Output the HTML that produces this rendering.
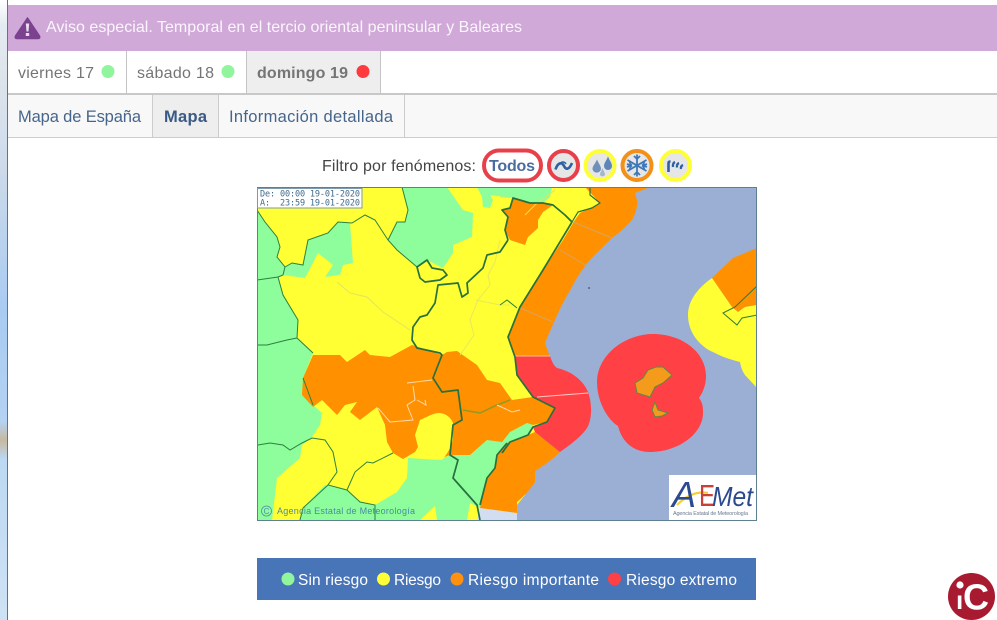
<!DOCTYPE html>
<html lang="es"><head><meta charset="utf-8"><title>Aviso especial</title>
<style>
html,body{margin:0;padding:0;background:#fff;width:997px;height:620px;overflow:hidden}
body{position:relative;font-family:"Liberation Sans",sans-serif}
.a{position:absolute}
svg{position:absolute;left:0;top:0}
</style></head><body>
<div class="a" style="left:0;top:0;width:7px;height:620px;background:linear-gradient(180deg,#fff 0,#e4ebf2 4%,#dde4ea 12%,#d6e0ec 20%,#c8d8ea 30%,#a9cbf2 50%,#b4d2f2 68%,#c6b9a0 71%,#bcd8f2 74%,#cfe2f5 100%)"></div>
<div class="a" style="left:7px;top:0;width:1px;height:620px;background:#5a6fb0"></div>
<div class="a" style="left:8px;top:5px;width:989px;height:46px;background:#d0a9d9"></div>
<div class="a" style="left:8px;top:93px;width:989px;height:2px;background:#c8c8c8"></div>
<div class="a" style="left:247px;top:51px;width:133px;height:42px;background:#eee"></div>
<div class="a" style="left:126px;top:51px;width:1px;height:42px;background:#c4c4c4"></div>
<div class="a" style="left:246px;top:51px;width:1px;height:42px;background:#c4c4c4"></div>
<div class="a" style="left:380px;top:51px;width:1px;height:42px;background:#c4c4c4"></div>
<div class="a" style="left:8px;top:95px;width:989px;height:42px;background:#f8f8f8"></div>
<div class="a" style="left:153px;top:95px;width:65px;height:42px;background:#eee"></div>
<div class="a" style="left:152px;top:95px;width:1px;height:42px;background:#ccc"></div>
<div class="a" style="left:218px;top:95px;width:1px;height:42px;background:#ccc"></div>
<div class="a" style="left:404px;top:95px;width:1px;height:42px;background:#ccc"></div>
<div class="a" style="left:8px;top:137px;width:989px;height:1px;background:#ccc"></div>
<div class="a" style="left:257px;top:558px;width:499px;height:42px;background:#4874b8"></div>

<svg width="997" height="620" viewBox="0 0 997 620" font-family="'Liberation Sans',sans-serif">
<defs><clipPath id="m"><rect x="258" y="188" width="498" height="332"/></clipPath></defs>
<path d="M27.500 18 L39.500 36 Q40.500 38.500 38 38.500 L17 38.500 Q14.500 38.500 15.500 36 Z" fill="#7b4290" stroke="#7b4290" stroke-width="1.500" stroke-linejoin="round"/>
<path d="M25.800 23.500h3.400l-.7 8h-2z M25.800 33h3.400v3h-3.400z" fill="#ecdcf0"/>
<text x="46" y="32" font-size="16" fill="#fbf5fc" textLength="476" lengthAdjust="spacing">Aviso especial. Temporal en el tercio oriental peninsular y Baleares</text>

<text x="18" y="78" font-size="16" fill="#757575" textLength="76" lengthAdjust="spacing">viernes 17</text>
<circle cx="108" cy="71.500" r="6.500" fill="#90f59c"/>
<text x="137" y="78" font-size="16" fill="#757575" textLength="77" lengthAdjust="spacing">sábado 18</text>
<circle cx="228" cy="71.500" r="6.500" fill="#90f59c"/>
<text x="257" y="78" font-size="16" font-weight="bold" fill="#757575" textLength="91" lengthAdjust="spacing">domingo 19</text>
<circle cx="363" cy="71.500" r="6.500" fill="#ff3a3f"/>

<text x="18" y="122" font-size="16.500" fill="#46658c" textLength="123" lengthAdjust="spacing">Mapa de España</text>
<text x="164" y="122" font-size="16.500" font-weight="bold" fill="#3a5a85" textLength="43" lengthAdjust="spacing">Mapa</text>
<text x="229" y="122" font-size="16.500" fill="#46658c" textLength="164" lengthAdjust="spacing">Información detallada</text>

<text x="322" y="171" font-size="16" fill="#444" textLength="154" lengthAdjust="spacing">Filtro por fenómenos:</text>
<rect x="484" y="150.500" width="57" height="30" rx="15" fill="#fff" stroke="#e8404a" stroke-width="4"/>
<text x="489" y="171" font-size="16" font-weight="bold" fill="#4b6c9e" textLength="46" lengthAdjust="spacing">Todos</text>
<circle cx="563.500" cy="165.500" r="14.500" fill="#e6e6e6" stroke="#e8404a" stroke-width="4"/>
<path d="M555.500 169.500C558 162 562 162 564 166S569 170 572 163" fill="none" stroke="#2f5fa5" stroke-width="2.600"/>
<path d="M559 164.500C562 160.500 565 162 566 164" fill="none" stroke="#2f5fa5" stroke-width="1.400"/>
<circle cx="600" cy="165.500" r="14.500" fill="#e6e6e6" stroke="#ffff38" stroke-width="4"/>
<path d="M597 159.500C595 164 592.500 166 592.500 169A4.300 4.300 0 0 0 601 169C601 166 599 164 597 159.500Z" fill="#6f90ba"/>
<path d="M608 156.500C606.500 160.500 604 163 604 166A4 4 0 0 0 612 166C612 163 609.500 160.500 608 156.500Z" fill="#5f86b8"/>
<path d="M602.500 168C601.500 171 600 172.500 600 174.500A2.600 2.600 0 0 0 605 174.500C605 172.500 603.500 171 602.500 168Z" fill="#a4b6cc"/>
<circle cx="637" cy="165.500" r="14.500" fill="#e6e6e6" stroke="#f39019" stroke-width="4"/>
<g stroke="#3f78b8" stroke-width="1.800" fill="none">
<path d="M637 154.500v22M627.500 160l19 11M627.500 171l19-11"/>
<path d="M634 156l3 3 3-3M634 175l3-3 3 3M627 164l4 1.500-1.500-4.500M647 164l-4 1.500 1.500-4.500M627 167l4-1.500-1.500 4.500M647 167l-4-1.500 1.500 4.500"/>
</g>
<circle cx="675.500" cy="165.500" r="14.500" fill="#e6e6e6" stroke="#ffff38" stroke-width="4"/>
<g fill="none" stroke="#2f5fa5">
<path d="M668.500 172v-9q0-1.500 2-1.500" stroke-width="2.600"/>
<path d="M673 167q-.5-4 2-5M677 167.500q-.5-3.500 2-4.500M681 169q-.5-3 2-4" stroke-width="2.300"/>
</g>

<g clip-path="url(#m)">
<rect x="257" y="187" width="500" height="334" fill="#ffff33"/>
<!-- sea -->
<path d="M625 187H757V521H517V505L525 495L530 475L545 460L540 432L550 425L560 410L540 400L525 360L520 340L540 290L575 230L590 222L615 200Z" fill="#9bafd5"/>
<!-- greens -->
<g fill="#8efd9c">
<path d="M257 210L265 222L277 237L280 247L277 257L285 267L283 275L278 277L283 295L298 320L297 338L313 353L303 378L302 395L313 405L322 413L320 425L312 437L302 445L300 458L277 478L272 520H257Z"/>
<path d="M402 187L408 210L405 222L397 222L388 240L397 250L417 267L427 260L443 268L453 253L453 245L472 237L473 213L463 210L447 187Z"/>
<path d="M285 267L292 263L303 265L308 240L328 233L338 222L350 223L352 250L353 263L343 265L340 275L325 277L333 265L318 253L305 278L283 275Z"/>
<path d="M477 187H552L550 197L543 203L530 203L513 198L505 197L490 195L493 200L490 208L483 207L482 197Z"/>
<path d="M325 485L347 490L360 502L375 505L397 492L407 478L408 458L440 460L450 455L470 455L487 440L502 440L510 432L527 423L533 425L528 435L510 442L497 455L495 468L487 478L480 508L470 503L467 520H437L435 506L420 520H300L303 508Z"/>
</g>
<path d="M480 508L517 513V521H477Z" fill="#d3ddf1"/>
<!-- orange -->
<g fill="#ff9000">
<path d="M513 198L530 203L543 203L553 205L543 212L538 220L538 228L528 237L525 245L510 240L505 230L508 217L502 210L510 208Z"/>
<path d="M585 187L600 203L580 213L575 220L563 240L543 270L520 307L508 337L515 357H550L545 343C548 335 552 327 555 320C560 308 566 297 572 287C577 277 583 268 590 260C597 252 605 245 612 238C620 232 627 226 632 220C636 212 638 205 637 200L635 193L650 187Z"/>
<path d="M313 355L340 355L347 362L365 350L370 355L390 357L412 345L442 355L447 352L457 351L477 365L487 380L500 383L512 400L533 397L555 408L547 422L533 425L527 423L510 432L502 442L487 440L470 455H450L442 458L418 447L415 452L403 459L393 453L387 442L385 425L377 407L360 420L350 412L357 402L345 405L337 415L322 400L313 407L302 395L303 378Z"/>
<path d="M535 432L560 452C552 460 543 466 535 471V482C530 490 523 497 517 502V513L480 508L487 478L495 468L497 455L507 443L528 435Z"/>
<path d="M712 278L733 258L757 248V305L745 307L738 312L732 307Z"/>
</g>
<path d="M420 420C427 417 433 413 440 413C447 414 451 418 453 423L453 440C451 448 447 454 442 460L418 447L415 435Z" fill="#ffff33"/>
<!-- red -->
<g fill="#ff4044">
<path d="M515 356H550C552 362 554 366 557 368C575 372 586 384 589 395C592 405 592 420 587 428C582 436 570 445 560 452L535 432L533 427L547 422L555 408L533 397L517 375Z"/>
<path d="M597 382C597 355 625 334 653 334C682 334 706 352 706 376C706 385 703 392 699 398C703 403 703 408 703 413C703 434 678 452 650 452C633 452 622 442 618 426C608 420 597 402 597 382Z"/>
</g>
<path d="M635 383L643 378L648 370L656 367L663 367L672 375L663 383L655 387L650 397L637 393Z M655 402L658 410L668 413L662 416L655 417L652 410Z" fill="#f59b1b" stroke="#5c8a45" stroke-width="1"/>
<!-- balearic NE -->
<path d="M712 278C695 290 688 303 688 315C688 335 703 348 713 352C722 357 732 360 740 362C741 368 743 372 745 375L757 388V305L745 307L738 312L732 307Z" fill="#ffff33"/>
<path d="M757 286L735 307L723 313L737 325L742 318L757 315" fill="none" stroke="#2c7a3c" stroke-width="1"/>
<!-- pale lines -->
<g fill="none" stroke-width="1">
<path d="M573 222L612 238M560 250L587 266M520 308L553 322" stroke="#d8a45c"/>
<path d="M537 397L588 393" stroke="#ffc8c8"/>
<path d="M515 356H550" stroke="#ffc090"/>
<path d="M337 282L350 293L367 297L383 312L410 330" stroke="#e4e45a"/>
<path d="M500 240L495 262L488 275L490 285L478 300L470 320L474 335L460 355M476 300L500 305L510 305" stroke="#e8e85a"/>
<path d="M500 197L520 198M555 190L535 205L525 215" stroke="#e4e45a"/>
<path d="M407 383L432 380M413 386L415 400L407 405L413 420L390 422L378 408M425 400L426 405L417 400" stroke="#ffd9a8"/>
<path d="M463 410L480 413L497 405L510 400" stroke="#8f9a20" stroke-width="1.500"/>
<path d="M497 405L512 412L520 410" stroke="#ffd9a8"/>
</g>
<!-- thin borders -->
<g fill="none" stroke="#2c8040" stroke-width="1">
<path d="M257 210L265 222L277 237L280 247L277 257L285 267L283 275L278 277L257 280"/>
<path d="M285 267L292 263L303 265L308 240L328 233L338 222L352 223L365 215L375 220L388 240L397 250L417 267"/>
<path d="M388 240L397 222L405 222L408 210L402 187"/>
<path d="M278 277L283 295L298 320L297 338L287 340L267 345H257M297 338L313 353"/>
<path d="M258 445L270 443L283 445L290 450L302 443L312 438L325 440L333 452L337 472L328 485L347 490L355 472L367 462L373 463L393 453"/>
<path d="M328 485L303 508L300 520M347 490L360 502L375 505V520"/>
<path d="M500 305L507 300L517 308M303 378L313 405"/>
</g>
<!-- thick borders -->
<g fill="none" stroke="#27703f" stroke-width="1.700" stroke-linejoin="round">
<path d="M417 267L427 260L432 268L443 270L447 275L440 280L425 282L420 278Z"/>
<path d="M508 240L500 252L487 255L483 268L467 283L468 293L462 297L458 283L438 285L435 303L427 315L420 317L413 327L412 340L417 348L440 353L442 355L433 378L442 392L458 390L462 420L453 425L450 455L458 460L453 478L477 505L480 520"/>
<path d="M508 240L505 230L508 217L502 210L510 208L513 198L530 203L543 203L553 205L565 215L572 222"/>
<path d="M572 222L543 270L520 307L508 337L515 357L517 375L533 397L555 408L547 422L533 427L528 435L510 442L502 453"/>
<path d="M507 443L497 455L495 468L487 478L480 505"/>
<path d="M572 222L578 212L592 208L600 203L590 195L590 187" stroke-width="1.200"/>
</g>
<circle cx="589" cy="288" r="1" fill="#3c6a90"/>
</g>
<rect x="257.500" y="187.500" width="499" height="333" fill="none" stroke="#5f8090"/>
<rect x="257.500" y="188.500" width="104.500" height="19.500" fill="#fff" stroke="#7f9aac" stroke-width="1"/>
<text x="260" y="196.500" font-family="'DejaVu Sans Mono','Liberation Mono',monospace" font-size="8.500" fill="#3f6a8c" textLength="100" lengthAdjust="spacing" xml:space="preserve">De: 00:00 19-01-2020</text>
<text x="260" y="205.500" font-family="'DejaVu Sans Mono','Liberation Mono',monospace" font-size="8.500" fill="#3f6a8c" textLength="100" lengthAdjust="spacing" xml:space="preserve">A:  23:59 19-01-2020</text>

<circle cx="266.500" cy="511" r="5" fill="none" stroke="#4f8fa8" stroke-width=".8"/>
<text x="266.500" y="514" font-size="8" fill="#4f8fa8" text-anchor="middle">C</text>
<text x="277" y="514" font-size="9" fill="#4a8aa6" textLength="138" lengthAdjust="spacing">Agencia Estatal de Meteorología</text>

<rect x="669" y="475" width="87" height="45" fill="#fff"/>
<path d="M677 505Q692 490 708 493" fill="none" stroke="#f2d23a" stroke-width="2.200"/>
<text x="672" y="507" font-style="italic" font-size="36" fill="#2b4a90" textLength="24" lengthAdjust="spacingAndGlyphs">A</text>
<text x="699" y="506" font-size="31" fill="#c8403a" textLength="16" lengthAdjust="spacingAndGlyphs">E</text>
<text x="712" y="506" font-style="italic" font-size="28" fill="#2b4a90" textLength="41" lengthAdjust="spacingAndGlyphs">Met</text>
<text x="673" y="515" font-size="5.500" fill="#6a7a90" textLength="75" lengthAdjust="spacing">Agencia Estatal de Meteorología</text>

<circle cx="288" cy="579" r="6.500" fill="#90f59c"/>
<circle cx="383.500" cy="579" r="6.500" fill="#ffff38"/>
<circle cx="457" cy="579" r="6.500" fill="#ff9010"/>
<circle cx="614.500" cy="579" r="6.500" fill="#ff4044"/>
<g font-size="15.500" fill="#fff">
<text x="298" y="585" textLength="70" lengthAdjust="spacing">Sin riesgo</text>
<text x="394" y="585" textLength="47" lengthAdjust="spacing">Riesgo</text>
<text x="468" y="585" textLength="131" lengthAdjust="spacing">Riesgo importante</text>
<text x="626" y="585" textLength="111" lengthAdjust="spacing">Riesgo extremo</text>
</g>

<circle cx="971.500" cy="596.500" r="23.500" fill="#a81a30"/>
<circle cx="960" cy="585" r="3.600" fill="#fff"/>
<text x="956" y="609" font-size="26" font-weight="bold" fill="#fff">ı</text>
<text x="963" y="609.500" font-size="36" font-weight="bold" fill="#fff">C</text>
</svg>
</body></html>
